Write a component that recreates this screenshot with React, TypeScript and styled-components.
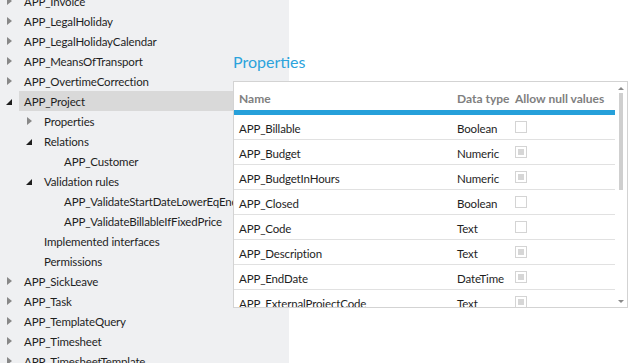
import React from 'react';
import styled, { createGlobalStyle } from 'styled-components';

const GlobalStyle = createGlobalStyle`
  body {
    margin: 0;
    font-family: 'Segoe UI', Lato, 'Noto Sans', sans-serif;
    font-size: 11.5px;
    letter-spacing: -0.15px;
    color: #1e1e1e;
    background: #ffffff;
  }
`;

const Page = styled.div`
  display: grid;
  grid-template-columns: 233px 56px 1fr;
  grid-template-rows: 363px;
  height: 363px;
  overflow: hidden;
`;

const TreePane = styled.div`
  grid-column: 1 / 3;
  grid-row: 1;
  background: #eff0f2;
  overflow: hidden;
`;

const TreeList = styled.div`
  margin-top: -9px;
  display: flex;
  flex-direction: column;
`;

const TreeRow = styled.div<{ $level: number }>`
  display: flex;
  align-items: stretch;
  height: 20px;
  flex-shrink: 0;
  padding-left: ${(p) => p.$level * 20}px;
`;

const ArrowBox = styled.div`
  width: 19px;
  display: flex;
  align-items: center;
  padding-left: 6px;
  box-sizing: border-box;
`;

const Collapsed = styled.span`
  margin-left: 1px;
  width: 0;
  height: 0;
  border-top: 4px solid transparent;
  border-bottom: 4px solid transparent;
  border-left: 5px solid #888888;
`;

const Expanded = styled.span`
  width: 0;
  height: 0;
  border-left: 6px solid transparent;
  border-bottom: 6px solid #1e1e1e;
  margin-top: 1px;
`;

const TreeLabel = styled.div<{ $selected?: boolean }>`
  flex: 1;
  display: flex;
  align-items: center;
  padding-left: 5px;
  white-space: nowrap;
  background: ${(p) => (p.$selected ? '#d9d9d9' : 'transparent')};
`;

const Detail = styled.div`
  grid-column: 2 / 4;
  grid-row: 1;
  display: flex;
  flex-direction: column;
  padding-top: 50px;
  min-width: 0;
`;

const Heading = styled.h2`
  margin: 0 0 8px 0;
  font-weight: normal;
  font-size: 16px;
  letter-spacing: 0;
  line-height: 23px;
  color: #2ba3dc;
`;

const Box = styled.div`
  display: flex;
  height: 227px;
  box-sizing: border-box;
  border: 1px solid #d3d3d3;
  background: #ffffff;
  margin-right: 1px;
  overflow: hidden;
`;

const Table = styled.div`
  flex: 1;
  display: flex;
  flex-direction: column;
  overflow: hidden;
`;

const Columns = styled.div`
  display: grid;
  grid-template-columns: 218px 58px 1fr;
  padding-left: 5px;
  align-items: center;
  flex-shrink: 0;
  box-sizing: border-box;
  white-space: nowrap;
`;

const HeadRow = styled(Columns)`
  height: 33px;
  padding-top: 4px;
  font-size: 12px;
  letter-spacing: 0;
  font-weight: bold;
  color: #808080;
  border-bottom: 5px solid #26a0da;
`;

const BodyRow = styled(Columns)`
  height: 25px;
  padding-top: 2px;
  border-bottom: 1px solid #e1e1e1;
`;

const Check = styled.span<{ $filled?: boolean }>`
  width: 12px;
  height: 12px;
  box-sizing: border-box;
  border: 1px solid #d4d4d4;
  padding: 2px;
  display: flex;
  margin-top: -2px;

  &::after {
    content: '';
    flex: 1;
    background: ${(p) => (p.$filled ? '#d6d6d6' : 'transparent')};
  }
`;

const ScrollBar = styled.div`
  width: 12px;
  display: flex;
  flex-direction: column;
  align-items: center;
  padding: 5px 0 4px;
`;

const ArrowUp = styled.span`
  width: 0;
  height: 0;
  border-left: 3px solid transparent;
  border-right: 3px solid transparent;
  border-bottom: 3px solid #8a8a8a;
`;

const ArrowDown = styled.span`
  margin-top: auto;
  width: 0;
  height: 0;
  border-left: 3px solid transparent;
  border-right: 3px solid transparent;
  border-top: 3px solid #8a8a8a;
`;

const Thumb = styled.div`
  width: 4px;
  height: 97px;
  margin-top: 3px;
  background: #cfcfcf;
`;

type Node = { label: string; level: number; arrow?: 'open' | 'closed'; selected?: boolean };

const tree: Node[] = [
  { label: 'APP_Invoice', level: 0, arrow: 'closed' },
  { label: 'APP_LegalHoliday', level: 0, arrow: 'closed' },
  { label: 'APP_LegalHolidayCalendar', level: 0, arrow: 'closed' },
  { label: 'APP_MeansOfTransport', level: 0, arrow: 'closed' },
  { label: 'APP_OvertimeCorrection', level: 0, arrow: 'closed' },
  { label: 'APP_Project', level: 0, arrow: 'open', selected: true },
  { label: 'Properties', level: 1, arrow: 'closed' },
  { label: 'Relations', level: 1, arrow: 'open' },
  { label: 'APP_Customer', level: 2 },
  { label: 'Validation rules', level: 1, arrow: 'open' },
  { label: 'APP_ValidateStartDateLowerEqEnd', level: 2 },
  { label: 'APP_ValidateBillableIfFixedPrice', level: 2 },
  { label: 'Implemented interfaces', level: 1 },
  { label: 'Permissions', level: 1 },
  { label: 'APP_SickLeave', level: 0, arrow: 'closed' },
  { label: 'APP_Task', level: 0, arrow: 'closed' },
  { label: 'APP_TemplateQuery', level: 0, arrow: 'closed' },
  { label: 'APP_Timesheet', level: 0, arrow: 'closed' },
  { label: 'APP_TimesheetTemplate', level: 0, arrow: 'closed' },
];

const props = [
  { name: 'APP_Billable', type: 'Boolean', nullable: false },
  { name: 'APP_Budget', type: 'Numeric', nullable: true },
  { name: 'APP_BudgetInHours', type: 'Numeric', nullable: true },
  { name: 'APP_Closed', type: 'Boolean', nullable: false },
  { name: 'APP_Code', type: 'Text', nullable: false },
  { name: 'APP_Description', type: 'Text', nullable: true },
  { name: 'APP_EndDate', type: 'DateTime', nullable: true },
  { name: 'APP_ExternalProjectCode', type: 'Text', nullable: true },
];

const App = () => {
  return (
    <>
      <GlobalStyle />
      <Page>
        <TreePane>
          <TreeList>
            {tree.map((n) => (
              <TreeRow key={n.label} $level={n.level}>
                <ArrowBox>
                  {n.arrow === 'closed' && <Collapsed />}
                  {n.arrow === 'open' && <Expanded />}
                </ArrowBox>
                <TreeLabel $selected={n.selected}>{n.label}</TreeLabel>
              </TreeRow>
            ))}
          </TreeList>
        </TreePane>
        <Detail>
          <Heading>Properties</Heading>
          <Box>
            <Table>
              <HeadRow>
                <span>Name</span>
                <span>Data type</span>
                <span>Allow null values</span>
              </HeadRow>
              {props.map((p) => (
                <BodyRow key={p.name}>
                  <span>{p.name}</span>
                  <span>{p.type}</span>
                  <Check $filled={p.nullable} />
                </BodyRow>
              ))}
            </Table>
            <ScrollBar>
              <ArrowUp />
              <Thumb />
              <ArrowDown />
            </ScrollBar>
          </Box>
        </Detail>
      </Page>
    </>
  );
};

export default App;
